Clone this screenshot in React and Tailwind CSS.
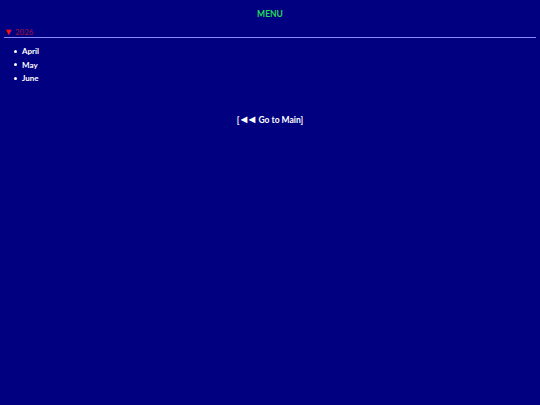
export default function App() {
  return (
    <div
      className="min-h-[405px] w-full bg-[#000080] text-white"
      style={{ fontFamily: 'Lato, "Noto Sans", sans-serif' }}
    >
      {/* Title */}
      <h1 className="pt-[8px] text-center text-[8.5px] font-bold leading-[12px] text-[#22dd55]">
        MENU
      </h1>

      {/* Year group */}
      <details open className="mx-[4px] mt-[7px]">
        <summary className="flex list-none items-center gap-[2px] border-b border-[#8a8aff] text-[8px] leading-[10px] text-[#a0103a] [&::-webkit-details-marker]:hidden">
          <span className="text-[9px] leading-[10px] text-[#ff1010]">▼</span>
          <span>2026</span>
        </summary>
        <ul className="mt-[8px] ml-[10px] flex flex-col gap-[3px] text-[8px] font-bold leading-[10.5px]">
          {["April", "May", "June"].map((m) => (
            <li key={m} className="flex items-center gap-[5px]">
              <span className="h-[3px] w-[3px] rounded-full bg-white" />
              <span>{m}</span>
            </li>
          ))}
        </ul>
      </details>

      {/* Back link */}
      <div className="mt-[30px] flex items-center justify-center text-[8.5px] font-bold leading-[12px]">
        <span>[</span>
        <span className="ml-[2px] flex items-center gap-[2px] text-[7.5px]">
          <span>◀</span>
          <span>◀</span>
        </span>
        <span className="ml-[3px]">Go to Main]</span>
      </div>
    </div>
  );
}
